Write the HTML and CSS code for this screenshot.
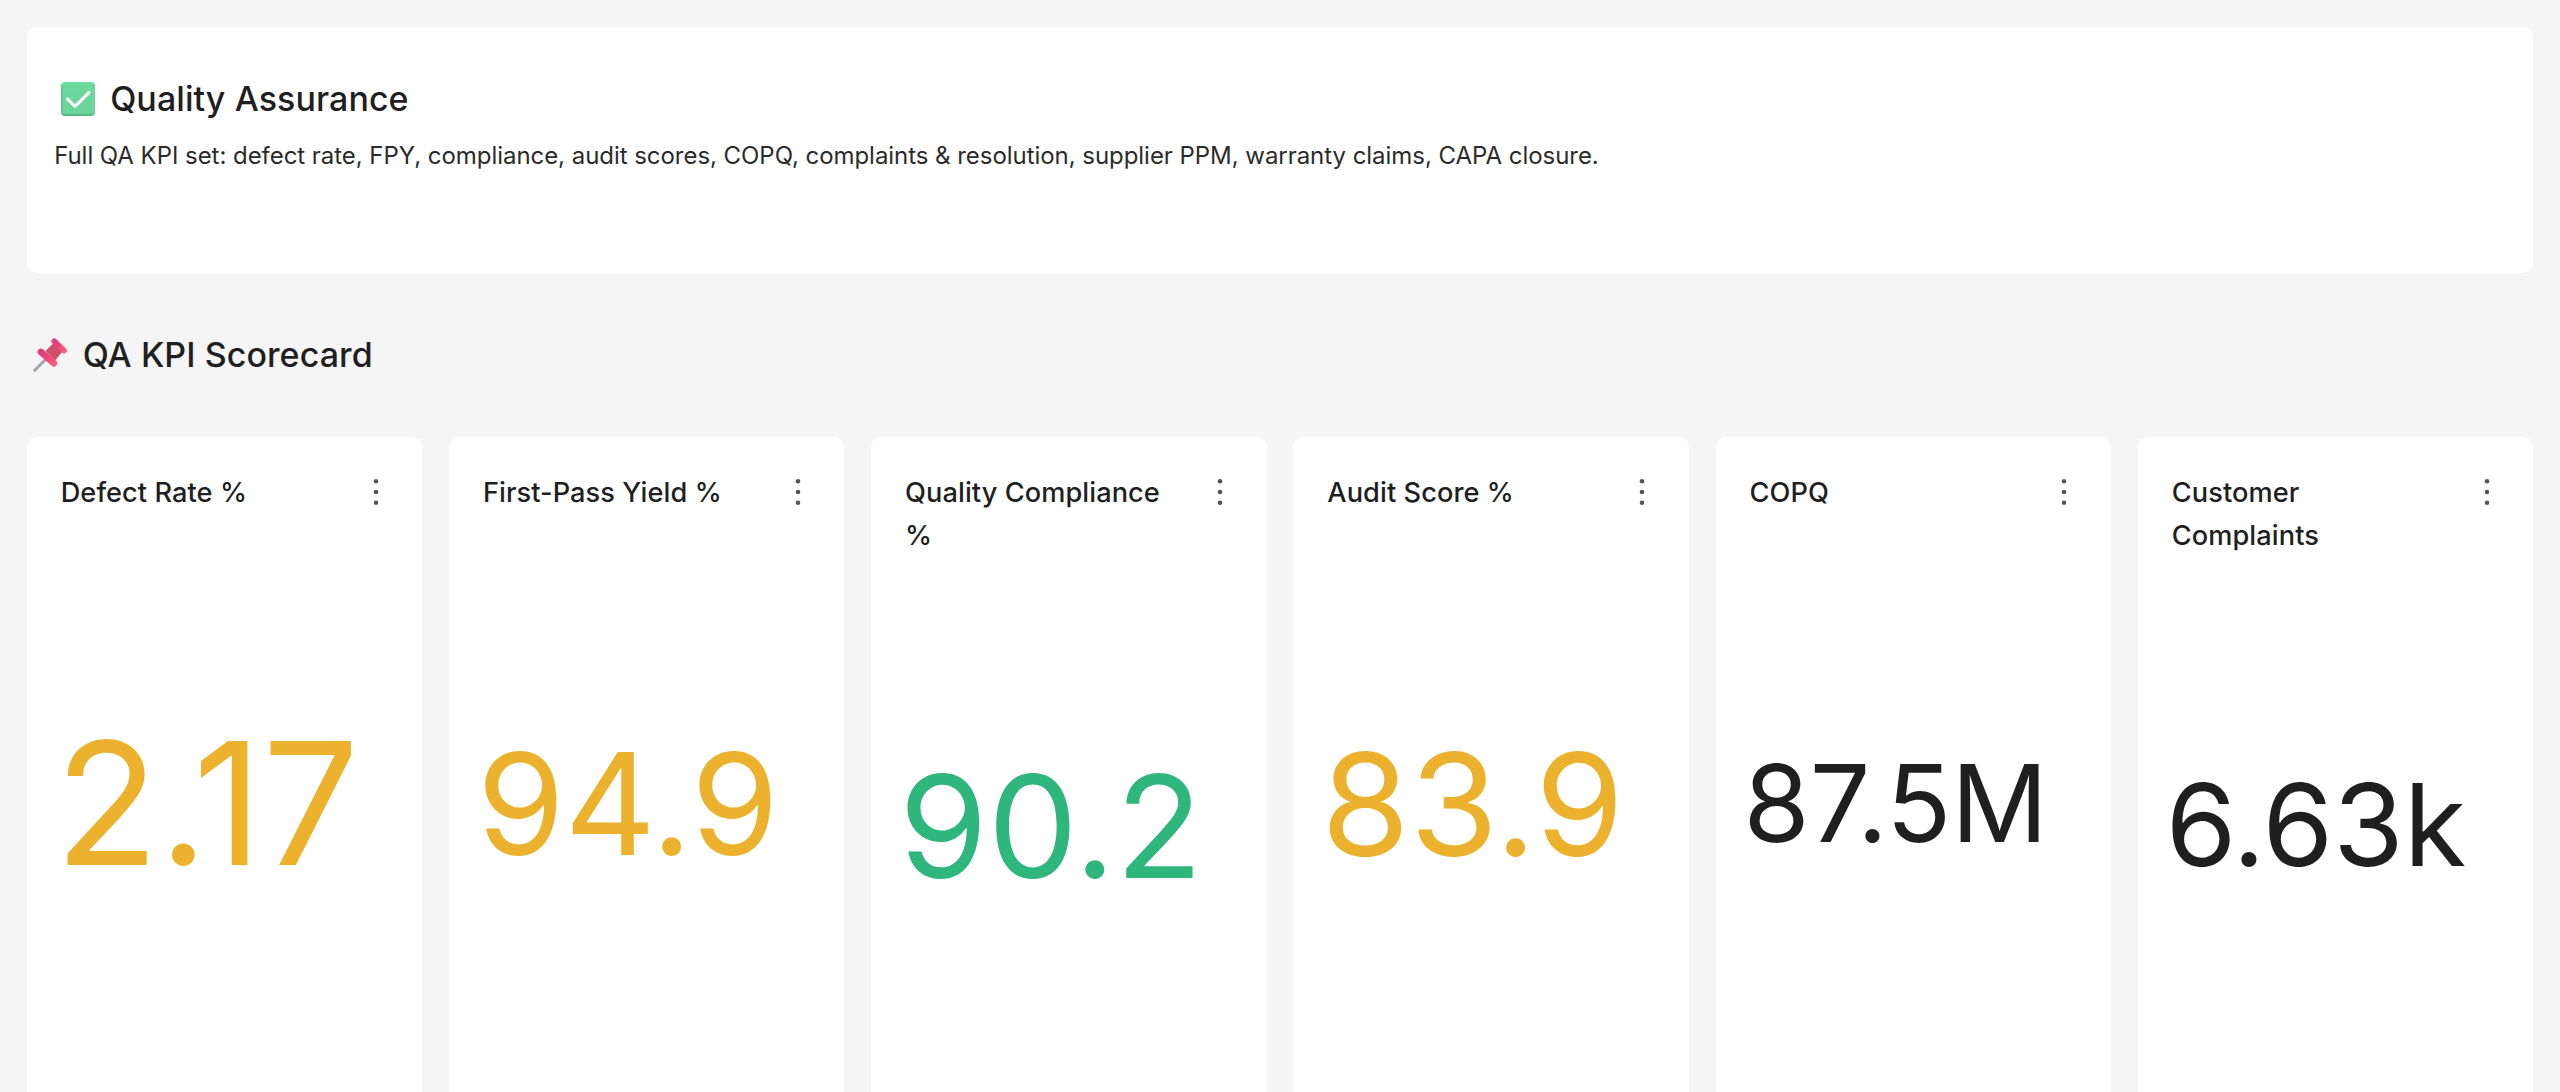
FILE: index.html
```html
<!DOCTYPE html>
<html lang="en">
<head>
  <meta charset="UTF-8" />
  <meta name="viewport" content="width=device-width, initial-scale=1.0"/>
  <title>Quality Assurance</title>
  <link rel="stylesheet" href="styles.css">
</head>
<body>

<div class="dashboard">
  <!-- Intro -->
  <div class="intro">
    <h2 class="heading">
      <svg class="emoji" viewBox="0 0 34 34">
        <defs>
          <linearGradient id="boxFill" x1="0" y1="0" x2="0" y2="1">
            <stop offset="0" stop-color="#6fe0a2" />
            <stop offset="0.12" stop-color="#6bd89c" />
            <stop offset="0.9" stop-color="#6bd49b" />
            <stop offset="1" stop-color="#4fae7c" />
          </linearGradient>
        </defs>
        <rect width="34" height="34" rx="4" fill="url(#boxFill)" />
        <path d="M1 4v26" stroke="#57b583" stroke-width="1.4" stroke-linecap="round" opacity=".7" />
        <path d="M6.5 17 L14 24.3 L28 10.5" fill="none" stroke="#f7f3fb" stroke-width="3.2" stroke-linecap="round" stroke-linejoin="round" />
      </svg>
      <span>Quality Assurance</span>
    </h2>
    <p class="intro-text">Full QA KPI set: defect rate, FPY, compliance, audit scores, COPQ, complaints &amp; resolution, supplier PPM, warranty claims, CAPA closure.</p>
  </div>

  <!-- Section title -->
  <h2 class="heading section-heading">
    <svg class="emoji" viewBox="0 0 34 34">
      <defs>
        <linearGradient id="pinFill" x1="0" y1="0" x2="1" y2="1">
          <stop offset="0" stop-color="#dc3f7c" />
          <stop offset="0.5" stop-color="#f0427a" />
          <stop offset="1" stop-color="#fb5a78" />
        </linearGradient>
      </defs>
      <path d="M1.8 32.2 L13 21" stroke="#aaa0b2" stroke-width="3" stroke-linecap="round" />
      <path d="M12.5 13 L21 4.5 L30 13 L22 22.5 Z" fill="#cf5069" />
      <path d="M8 14 L20.8 25.3" stroke="url(#pinFill)" stroke-width="6.6" stroke-linecap="round" />
      <path d="M21.3 3.2 L31 12.6" stroke="url(#pinFill)" stroke-width="5.6" stroke-linecap="round" />
    </svg>
    <span>QA KPI Scorecard</span>
  </h2>

  <!-- KPI cards -->
  <div class="cards">
    <div class="card">
      <div class="card-head">
        <h3>Defect Rate %</h3>
        <svg class="menu" viewBox="0 0 6 28"><circle cx="3" cy="3.3" r="2.3" /><circle cx="3" cy="14" r="2.3" /><circle cx="3" cy="24.7" r="2.3" /></svg>
      </div>
      <div class="value warn size-xl">2.17</div>
    </div>
    <div class="card">
      <div class="card-head">
        <h3>First-Pass Yield %</h3>
        <svg class="menu" viewBox="0 0 6 28"><circle cx="3" cy="3.3" r="2.3" /><circle cx="3" cy="14" r="2.3" /><circle cx="3" cy="24.7" r="2.3" /></svg>
      </div>
      <div class="value warn size-l">94.9</div>
    </div>
    <div class="card">
      <div class="card-head">
        <h3>Quality Compliance %</h3>
        <svg class="menu" viewBox="0 0 6 28"><circle cx="3" cy="3.3" r="2.3" /><circle cx="3" cy="14" r="2.3" /><circle cx="3" cy="24.7" r="2.3" /></svg>
      </div>
      <div class="value good size-l2">90.2</div>
    </div>
    <div class="card">
      <div class="card-head">
        <h3>Audit Score %</h3>
        <svg class="menu" viewBox="0 0 6 28"><circle cx="3" cy="3.3" r="2.3" /><circle cx="3" cy="14" r="2.3" /><circle cx="3" cy="24.7" r="2.3" /></svg>
      </div>
      <div class="value warn size-l2">83.9</div>
    </div>
    <div class="card">
      <div class="card-head">
        <h3>COPQ</h3>
        <svg class="menu" viewBox="0 0 6 28"><circle cx="3" cy="3.3" r="2.3" /><circle cx="3" cy="14" r="2.3" /><circle cx="3" cy="24.7" r="2.3" /></svg>
      </div>
      <div class="value size-s">87.5M</div>
    </div>
    <div class="card">
      <div class="card-head">
        <h3>Customer Complaints</h3>
        <svg class="menu" viewBox="0 0 6 28"><circle cx="3" cy="3.3" r="2.3" /><circle cx="3" cy="14" r="2.3" /><circle cx="3" cy="24.7" r="2.3" /></svg>
      </div>
      <div class="value size-m">6.63k</div>
    </div>
  </div>
</div>

</body>
</html>
```
FILE: styles.css
```css
* {
  box-sizing: border-box;
}

body, html {
  margin: 0;
  padding: 0;
  height: 100vh;
  overflow: hidden;
  font-family: Inter, sans-serif;
  background: #f5f5f5;
  color: #1f1f1f;
}

h2, h3, p {
  margin: 0;
}

.dashboard {
  padding: 27px 26.67px 0;
}

.intro {
  height: 246px;
  padding: 50px 27px 0;
  background: #fff;
  border-radius: 10px;
}

.heading {
  display: flex;
  align-items: center;
  gap: 15.5px;
  height: 44px;
  padding-left: 7px;
  font-size: 34px;
  font-weight: 500;
  line-height: 44px;
  letter-spacing: 0.07px;
}

.emoji {
  width: 34px;
  height: 34px;
  flex: none;
}

.intro-text {
  margin-top: 17px;
  padding-left: 0.5px;
  font-size: 24px;
  line-height: 36px;
  letter-spacing: -0.045px;
  color: #2b2b2b;
}

.section-heading {
  height: 164px;
  padding-left: 6.5px;
}

.cards {
  display: grid;
  grid-template-columns: repeat(6, 1fr);
  gap: 26.67px;
}

.card {
  display: flex;
  flex-direction: column;
  height: 689px;
  padding: 35px 33.33px 33.33px 28px;
  background: #fff;
  border-radius: 10px;
}

.card-head {
  display: flex;
  justify-content: space-between;
  align-items: flex-start;
  padding-left: 6px;
}

.card-head h3 {
  max-width: 270px;
  font-size: 27.2px;
  font-weight: 500;
  line-height: 42.67px;
  letter-spacing: 0.07px;
}

.menu {
  width: 6px;
  height: 28px;
  margin: 5.5px 10.3px 0 0;
  flex: none;
  fill: #555;
}

.value {
  flex: 1;
  display: flex;
  align-items: center;
  line-height: 1;
  white-space: nowrap;
}

.warn {
  color: #ecb22e;
}

.good {
  color: #2fb67c;
}

/* value sizes, so that each number fills the card width */
.size-xl {
  font-size: 170.6px;
}

.size-l {
  font-size: 141.5px;
}

.size-l2 {
  font-size: 143px;
}

.size-m {
  font-size: 114px;
}

.size-s {
  font-size: 107px;
}
```
